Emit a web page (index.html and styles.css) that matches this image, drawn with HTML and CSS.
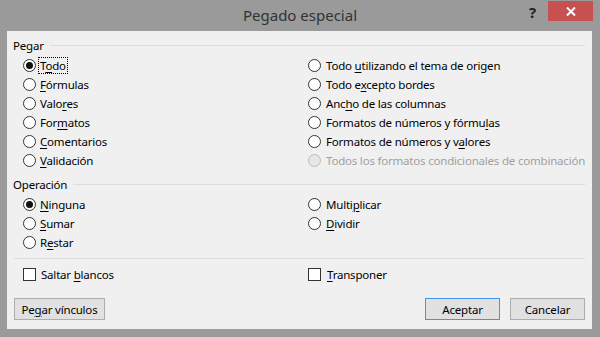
FILE: index.html
```html
<!DOCTYPE html>
<html lang="es">
  <head>
    <meta charset="UTF-8" />
    <title>Pegado especial</title>
    <link rel="stylesheet" href="styles.css">
  </head>
  <body>
    <div class="window">
      <div class="titlebar">
        <span class="title">Pegado especial</span>
        <span class="help">?</span>
        <span class="close">
          <svg width="10" height="9" viewBox="0 0 10 9">
            <path d="M1 0.5 L9 8.5 M9 0.5 L1 8.5" stroke="#fff" stroke-width="2" />
          </svg>
        </span>
      </div>

      <div class="panel">
        <div class="group-head"><span>Pegar</span></div>
        <div class="options">
          <div class="option"><span class="radio checked"></span><span class="focus">T<u>o</u>do</span></div>
          <div class="option"><span class="radio"></span><span>Todo <u>u</u>tilizando el tema de origen</span></div>
          <div class="option"><span class="radio"></span><span><u>F</u>órmulas</span></div>
          <div class="option"><span class="radio"></span><span>Todo e<u>x</u>cepto bordes</span></div>
          <div class="option"><span class="radio"></span><span>Valo<u>r</u>es</span></div>
          <div class="option"><span class="radio"></span><span>Anc<u>h</u>o de las columnas</span></div>
          <div class="option"><span class="radio"></span><span>For<u>m</u>atos</span></div>
          <div class="option"><span class="radio"></span><span>Formatos de números y fórmu<u>l</u>as</span></div>
          <div class="option"><span class="radio"></span><span><u>C</u>omentarios</span></div>
          <div class="option"><span class="radio"></span><span>Formatos de números y v<u>a</u>lores</span></div>
          <div class="option"><span class="radio"></span><span><u>V</u>alidación</span></div>
          <div class="option disabled"><span class="radio"></span><span>Todos los formatos condicionales de combinación</span></div>
        </div>

        <div class="group-head second"><span>Operación</span></div>
        <div class="options">
          <div class="option"><span class="radio checked"></span><span><u>N</u>inguna</span></div>
          <div class="option"><span class="radio"></span><span>Multi<u>p</u>licar</span></div>
          <div class="option"><span class="radio"></span><span><u>S</u>umar</span></div>
          <div class="option"><span class="radio"></span><span><u>D</u>ividir</span></div>
          <div class="option"><span class="radio"></span><span>R<u>e</u>star</span></div>
        </div>

        <div class="separator"></div>

        <div class="options checks">
          <div class="option"><span class="checkbox"></span><span>Saltar <u>b</u>lancos</span></div>
          <div class="option"><span class="checkbox"></span><span><u>T</u>ransponer</span></div>
        </div>

        <div class="buttons">
          <button class="btn wide">Pe<u>g</u>ar vínculos</button>
          <div class="spacer"></div>
          <button class="btn default">Aceptar</button>
          <button class="btn">Cancelar</button>
        </div>
      </div>
    </div>
  </body>
</html>
```

FILE: styles.css
```css
:root {
  --frame: #9a9a9a;
  --panel: #f0f0f0;
  --text: #000000;
  --line: #dcdcdc;
  --disabled: #a0a0a0;
  --close: #c75050;
  --btn: #e1e1e1;
  --btn-border: #adadad;
  --focus-blue: #3c98ec;
}

* {
  margin: 0;
  padding: 0;
  box-sizing: border-box;
}

body {
  font-family: "Noto Sans", sans-serif;
  font-size: 11.5px;
  letter-spacing: -0.2px;
  color: var(--text);
  background-color: var(--frame);
}

u {
  text-decoration-thickness: 1px;
  text-underline-offset: 2px;
}

.window {
  width: 600px;
  height: 337px;
  background-color: var(--frame);
  display: flex;
  flex-direction: column;
}

.titlebar {
  height: 31px;
  position: relative;
  display: flex;
  justify-content: center;
  align-items: center;
}

.title {
  font-size: 15px;
  letter-spacing: 0;
  color: #333;
  padding-bottom: 2px;
}

.help {
  position: absolute;
  left: 529px;
  top: 2px;
  font-size: 15px;
  font-weight: 700;
  color: #222;
}

.close {
  position: absolute;
  left: 548px;
  top: 1px;
  width: 45px;
  height: 20px;
  background-color: var(--close);
  display: flex;
  align-items: center;
  justify-content: center;
}

.panel {
  margin: 0 8px 0 7px;
  height: 298px;
  background-color: var(--panel);
  padding: 6px 7px 8px 6px;
  display: flex;
  flex-direction: column;
}

.group-head {
  display: flex;
  align-items: center;
  gap: 6px;
  height: 16px;
  margin-bottom: 3px;
}

.group-head::after {
  content: "";
  flex: 1;
  height: 1px;
  background-color: var(--line);
  margin-top: 1px;
}

.group-head.second {
  margin-top: 6px;
}

.options {
  display: grid;
  grid-template-columns: 285px 1fr;
  grid-auto-rows: 19px;
  padding-left: 10px;
}

.option {
  display: flex;
  align-items: center;
  gap: 4px;
  white-space: nowrap;
}

.option:nth-child(even) {
  gap: 5px;
}

.option.disabled {
  color: var(--disabled);
}

.radio {
  width: 13px;
  height: 13px;
  border: 1px solid #333;
  border-radius: 50%;
  background-color: #fff;
  display: flex;
  align-items: center;
  justify-content: center;
}

.radio.checked::after {
  content: "";
  width: 7px;
  height: 7px;
  border-radius: 50%;
  background-color: #111;
}

.disabled .radio {
  border-color: #bcbcbc;
  background-color: #e6e6e6;
}

.focus {
  outline: 1px dotted #000;
  padding: 0 1px;
  margin-left: -1px;
}

.separator {
  height: 1px;
  background-color: var(--line);
  margin: 6px 0 0 1px;
}

.checks {
  margin-top: 6px;
}

.checkbox {
  width: 13px;
  height: 13px;
  border: 1px solid #333;
  background-color: #fff;
  margin-right: 1px;
}

.buttons {
  display: flex;
  gap: 10px;
  margin-top: 14px;
  padding-left: 1px;
}

.spacer {
  flex: 1;
}

.btn {
  font-family: inherit;
  font-size: 11.5px;
  letter-spacing: -0.2px;
  color: var(--text);
  height: 22px;
  width: 75px;
  background-color: var(--btn);
  border: 1px solid var(--btn-border);
}

.btn.wide {
  width: 91px;
}

.btn.default {
  border-color: var(--focus-blue);
}
```
